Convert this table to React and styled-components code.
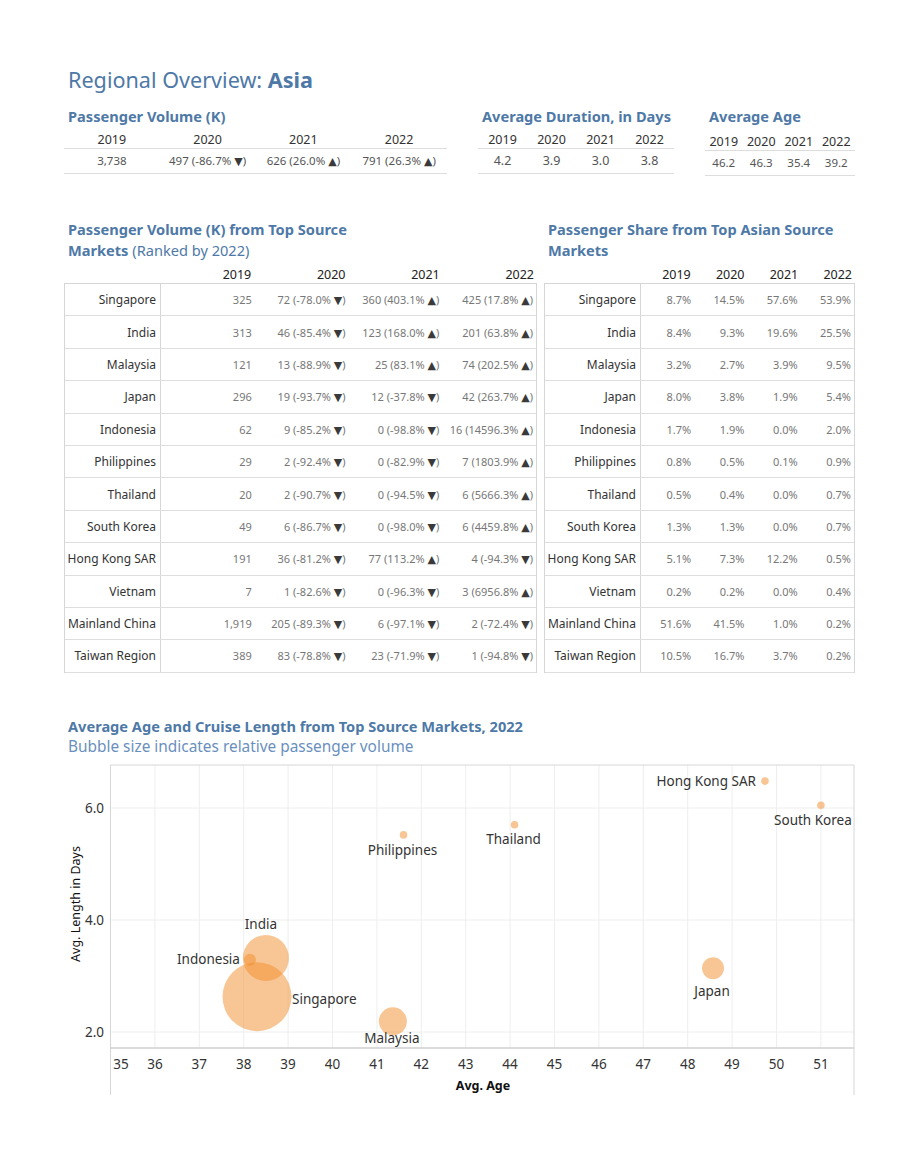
import React from 'react';
import styled, { createGlobalStyle } from 'styled-components';

const BLUE = '#4e79a7';
const FONT = '"Noto Sans", "Open Sans", sans-serif';

const GlobalStyle = createGlobalStyle`
  html, body { margin: 0; padding: 0; background: #fff; }
  body { font-family: ${FONT}; color: #333; }
  * { box-sizing: border-box; }
`;

const Page = styled.div`
  width: 920px;
  min-height: 1159px;
  padding: 67px 65px 0 64px;
`;

const Title = styled.h1`
  margin: 0 0 0 4px;
  font-size: 21.6px;
  line-height: 26px;
  font-weight: 400;
  color: ${BLUE};
  b { font-weight: 700; }
`;

const KpiRow = styled.div`
  display: flex;
  gap: 31px;
  margin-top: 14px;
`;

const KpiBlock = styled.section`
  width: ${(p) => p.$w}px;
`;

const BlockTitle = styled.h2`
  margin: 0 0 0 4px;
  font-size: 14.6px;
  line-height: 18px;
  font-weight: 700;
  color: ${BLUE};
  span { font-weight: 400; }
`;

const KpiGrid = styled.div`
  display: grid;
  grid-template-columns: repeat(4, 1fr);
  margin-top: ${(p) => p.$offset}px;
`;

const KpiHead = styled.div`
  text-align: center;
  font-size: 12.5px;
  line-height: 17px;
  color: #333;
`;

const KpiVal = styled.div`
  text-align: center;
  font-size: ${(p) => (p.$small ? 11.5 : 12.5)}px;
  height: 26px;
  line-height: 24px;
  color: #555;
  white-space: nowrap;
  border-top: 1px solid #ddd;
  border-bottom: 1px solid #ddd;
`;

const Tri = styled.b`
  font-family: "DejaVu Sans", sans-serif;
  font-weight: 400;
  font-size: 11px;
  color: #3a3a3a;
`;

const TablesRow = styled.div`
  display: grid;
  grid-template-columns: 473px 311px;
  gap: 7px;
  margin-top: 43px;
`;

const TableTitle = styled(BlockTitle)`
  line-height: 21px;
`;

const ColGrid = styled.div`
  display: grid;
  grid-template-columns: 96px repeat(4, 1fr);
`;

const YearHeader = styled(ColGrid)`
  margin-top: 6px;
  height: 16px;
  line-height: 16px;
  font-size: 12.5px;
  color: #222;
`;

const HeadCell = styled.div`
  text-align: right;
  padding-right: 3px;
`;

const Table = styled.div`
  border: 1px solid #d6d6d6;
  border-bottom: none;
`;

const Row = styled(ColGrid)`
  height: 32.4px;
  border-bottom: 1px solid #dedede;
  align-items: center;
`;

const LabelCell = styled.div`
  height: 100%;
  display: flex;
  align-items: center;
  justify-content: flex-end;
  padding-right: 4px;
  border-right: 1px solid #d6d6d6;
  font-size: 12px;
  color: #333;
  white-space: nowrap;
`;

const ValCell = styled.div`
  text-align: right;
  padding-right: 3px;
  font-size: 11px;
  color: #777;
  white-space: nowrap;
`;

const ChartSection = styled.section`
  margin-top: 44px;
`;

const Subtitle = styled.div`
  margin: 3px 0 0 4px;
  font-size: 15.4px;
  line-height: 18px;
  color: #6a8fbd;
`;

const ChartSvg = styled.svg`
  display: block;
  margin-top: 2px;
  font-family: ${FONT};
`;

const top = ['3,738', ['497 (-86.7%', 'd'], ['626 (26.0%', 'u'], ['791 (26.3%', 'u']];

const markets = [
  ['Singapore', '325', ['72 (-78.0%', 'd'], ['360 (403.1%', 'u'], ['425 (17.8%', 'u'], ['8.7%', '14.5%', '57.6%', '53.9%']],
  ['India', '313', ['46 (-85.4%', 'd'], ['123 (168.0%', 'u'], ['201 (63.8%', 'u'], ['8.4%', '9.3%', '19.6%', '25.5%']],
  ['Malaysia', '121', ['13 (-88.9%', 'd'], ['25 (83.1%', 'u'], ['74 (202.5%', 'u'], ['3.2%', '2.7%', '3.9%', '9.5%']],
  ['Japan', '296', ['19 (-93.7%', 'd'], ['12 (-37.8%', 'd'], ['42 (263.7%', 'u'], ['8.0%', '3.8%', '1.9%', '5.4%']],
  ['Indonesia', '62', ['9 (-85.2%', 'd'], ['0 (-98.8%', 'd'], ['16 (14596.3%', 'u'], ['1.7%', '1.9%', '0.0%', '2.0%']],
  ['Philippines', '29', ['2 (-92.4%', 'd'], ['0 (-82.9%', 'd'], ['7 (1803.9%', 'u'], ['0.8%', '0.5%', '0.1%', '0.9%']],
  ['Thailand', '20', ['2 (-90.7%', 'd'], ['0 (-94.5%', 'd'], ['6 (5666.3%', 'u'], ['0.5%', '0.4%', '0.0%', '0.7%']],
  ['South Korea', '49', ['6 (-86.7%', 'd'], ['0 (-98.0%', 'd'], ['6 (4459.8%', 'u'], ['1.3%', '1.3%', '0.0%', '0.7%']],
  ['Hong Kong SAR', '191', ['36 (-81.2%', 'd'], ['77 (113.2%', 'u'], ['4 (-94.3%', 'd'], ['5.1%', '7.3%', '12.2%', '0.5%']],
  ['Vietnam', '7', ['1 (-82.6%', 'd'], ['0 (-96.3%', 'd'], ['3 (6956.8%', 'u'], ['0.2%', '0.2%', '0.0%', '0.4%']],
  ['Mainland China', '1,919', ['205 (-89.3%', 'd'], ['6 (-97.1%', 'd'], ['2 (-72.4%', 'd'], ['51.6%', '41.5%', '1.0%', '0.2%']],
  ['Taiwan Region', '389', ['83 (-78.8%', 'd'], ['23 (-71.9%', 'd'], ['1 (-94.8%', 'd'], ['10.5%', '16.7%', '3.7%', '0.2%']],
];

const years = ['2019', '2020', '2021', '2022'];

const Change = ({ v }) => (
  <>
    {v[0]} <Tri>{v[1] === 'u' ? '▲' : '▼'}</Tri>)
  </>
);

// chart scales (svg coordinates)
const PL = 46.5, PR = 790, PT = 7, PB = 290, BOTTOM = 337;
const sx = (v) => PL + (v - 35) * 44.4;
const sy = (v) => 274 - (v - 2) * 56;

const bubbles = [
  { n: 'Singapore', a: 38.3, d: 2.63, r: 34.5, anchor: 'start', dx: 35, dy: 3 },
  { n: 'India', a: 38.5, d: 3.32, r: 23, anchor: 'middle', dx: -5, dy: -34 },
  { n: 'Indonesia', a: 38.14, d: 3.29, r: 6, anchor: 'end', dx: -10, dy: 0 },
  { n: 'Malaysia', a: 41.36, d: 2.19, r: 14, anchor: 'middle', dx: -1, dy: 17 },
  { n: 'Japan', a: 48.57, d: 3.14, r: 11, anchor: 'middle', dx: -1, dy: 23 },
  { n: 'Philippines', a: 41.6, d: 5.52, r: 3.8, anchor: 'middle', dx: -1, dy: 16 },
  { n: 'Thailand', a: 44.1, d: 5.7, r: 3.8, anchor: 'middle', dx: -1, dy: 15 },
  { n: 'Hong Kong SAR', a: 49.74, d: 6.48, r: 3.8, anchor: 'end', dx: -9, dy: 0 },
  { n: 'South Korea', a: 51.0, d: 6.05, r: 3.8, anchor: 'middle', dx: -8, dy: 15 },
];

const xTicks = Array.from({ length: 17 }, (_, i) => 35 + i);

function Chart() {
  return (
    <ChartSvg width="791" height="345" viewBox="0 0 791 345">
      {xTicks.slice(1).map((t) => (
        <line key={t} x1={sx(t)} x2={sx(t)} y1={PT} y2={PB} stroke="#eeeeee" strokeWidth="1" />
      ))}
      {[2, 4, 6].map((t) => (
        <line key={t} x1={PL} x2={PR} y1={sy(t)} y2={sy(t)} stroke="#eeeeee" strokeWidth="1" />
      ))}
      <line x1={PL} x2={PR} y1={PT} y2={PT} stroke="#d6d6d6" />
      <line x1={PL} x2={PL} y1={PT} y2={BOTTOM} stroke="#d6d6d6" />
      <line x1={PR} x2={PR} y1={PT} y2={BOTTOM} stroke="#d6d6d6" />
      <line x1={PL} x2={PR} y1={PB} y2={PB} stroke="#cfcfcf" strokeWidth="1.5" />

      {bubbles.map((b) => (
        <circle key={b.n} cx={sx(b.a)} cy={sy(b.d)} r={b.r} fill="#f28e2b" fillOpacity="0.5" />
      ))}
      {bubbles.map((b) => (
        <text
          key={b.n + 't'}
          x={sx(b.a) + b.dx}
          y={sy(b.d) + b.dy + 4.5}
          textAnchor={b.anchor}
          fontSize="13.5"
          fill="#333"
        >
          {b.n}
        </text>
      ))}

      {[2, 4, 6].map((t) => (
        <text key={t} x="40" y={sy(t) + 4.5} textAnchor="end" fontSize="13.5" fill="#333">
          {t.toFixed(1)}
        </text>
      ))}
      {xTicks.map((t) => (
        <text key={t} x={t === 35 ? 57 : sx(t)} y="311" textAnchor="middle" fontSize="13.5" fill="#333">
          {t}
        </text>
      ))}
      <text x="419" y="332" textAnchor="middle" fontSize="12.5" fontWeight="700" fill="#111">
        Avg. Age
      </text>
      <text
        x="0"
        y="0"
        transform="translate(16 146) rotate(-90)"
        textAnchor="middle"
        fontSize="12.5"
        fill="#111"
      >
        Avg. Length in Days
      </text>
    </ChartSvg>
  );
}

export default function App() {
  return (
    <>
      <GlobalStyle />
      <Page>
        <Title>
          Regional Overview: <b>Asia</b>
        </Title>

        <KpiRow>
          <KpiBlock $w={383}>
            <BlockTitle>Passenger Volume (K)</BlockTitle>
            <KpiGrid $offset={6}>
              {years.map((y) => (
                <KpiHead key={y}>{y}</KpiHead>
              ))}
              <KpiVal $small>{top[0]}</KpiVal>
              {top.slice(1).map((v, i) => (
                <KpiVal key={i} $small>
                  <Change v={v} />
                </KpiVal>
              ))}
            </KpiGrid>
          </KpiBlock>

          <KpiBlock $w={196}>
            <BlockTitle>Average Duration, in Days</BlockTitle>
            <KpiGrid $offset={6}>
              {years.map((y) => (
                <KpiHead key={y}>{y}</KpiHead>
              ))}
              {['4.2', '3.9', '3.0', '3.8'].map((v) => (
                <KpiVal key={v}>{v}</KpiVal>
              ))}
            </KpiGrid>
          </KpiBlock>

          <KpiBlock $w={150}>
            <BlockTitle>Average Age</BlockTitle>
            <KpiGrid $offset={8}>
              {years.map((y) => (
                <KpiHead key={y}>{y}</KpiHead>
              ))}
              {['46.2', '46.3', '35.4', '39.2'].map((v) => (
                <KpiVal key={v} $small>{v}</KpiVal>
              ))}
            </KpiGrid>
          </KpiBlock>
        </KpiRow>

        <TablesRow>
          <section>
            <TableTitle>
              Passenger Volume (K) from Top Source
              <br />
              Markets <span>(Ranked by 2022)</span>
            </TableTitle>
            <YearHeader>
              <div />
              {years.map((y) => (
                <HeadCell key={y}>{y}</HeadCell>
              ))}
            </YearHeader>
            <Table>
              {markets.map((m) => (
                <Row key={m[0]}>
                  <LabelCell>{m[0]}</LabelCell>
                  <ValCell>{m[1]}</ValCell>
                  <ValCell><Change v={m[2]} /></ValCell>
                  <ValCell><Change v={m[3]} /></ValCell>
                  <ValCell><Change v={m[4]} /></ValCell>
                </Row>
              ))}
            </Table>
          </section>

          <section>
            <TableTitle>
              Passenger Share from Top Asian Source
              <br />
              Markets
            </TableTitle>
            <YearHeader>
              <div />
              {years.map((y) => (
                <HeadCell key={y}>{y}</HeadCell>
              ))}
            </YearHeader>
            <Table>
              {markets.map((m) => (
                <Row key={m[0]}>
                  <LabelCell>{m[0]}</LabelCell>
                  {m[5].map((v, i) => (
                    <ValCell key={i}>{v}</ValCell>
                  ))}
                </Row>
              ))}
            </Table>
          </section>
        </TablesRow>

        <ChartSection>
          <BlockTitle>Average Age and Cruise Length from Top Source Markets, 2022</BlockTitle>
          <Subtitle>Bubble size indicates relative passenger volume</Subtitle>
          <Chart />
        </ChartSection>
      </Page>
    </>
  );
}
